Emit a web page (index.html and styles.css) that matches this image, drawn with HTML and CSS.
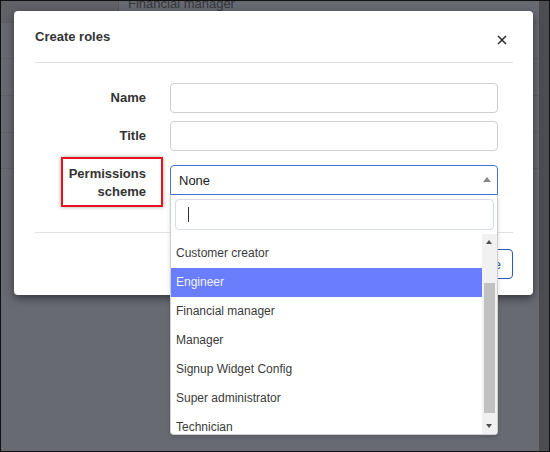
FILE: index.html
```html
<!DOCTYPE html>
<html lang="en">
<head>
<meta charset="utf-8">
<title>Create roles</title>
<link rel="stylesheet" href="styles.css">
</head>
<body>
<div class="screen">
  <div class="page">
    <div class="row row-first">
      <div class="cell-blank"></div>
      <div class="cell">Financial manager</div>
    </div>
    <div class="row row-a"></div>
    <div class="row row-b"></div>
    <div class="row row-b"></div>
    <div class="row row-a"></div>
  </div>
  <div class="scroll-strip"></div>

  <div class="modal">
    <div class="modal-header">
      <h4 class="modal-title">Create roles</h4>
      <svg class="close" width="10" height="10" viewBox="0 0 10 10"><path d="M1 1 L9 9 M9 1 L1 9" stroke="#2b2b2b" stroke-width="1.5" fill="none"/></svg>
    </div>
    <div class="modal-body">
      <div class="form-row">
        <label class="form-label">Name</label>
        <div class="input"></div>
      </div>
      <div class="form-row row-title">
        <label class="form-label">Title</label>
        <div class="input"></div>
      </div>
      <div class="form-row row-perm">
        <label class="form-label label-multi">Permissions<br>scheme<span class="annot"></span></label>
        <div class="select-wrap">
          <div class="select">
            <span>None</span>
            <span class="caret-up"></span>
          </div>
          <div class="dropdown">
            <div class="search"><span class="cursor"></span></div>
            <div class="list">
              <div class="item">Customer creator</div>
              <div class="item active">Engineer</div>
              <div class="item">Financial manager</div>
              <div class="item">Manager</div>
              <div class="item">Signup Widget Config</div>
              <div class="item">Super administrator</div>
              <div class="item">Technician</div>
              <div class="scrollbar">
                <span class="sb-up"></span>
                <span class="sb-thumb"></span>
                <span class="sb-down"></span>
              </div>
            </div>
          </div>
        </div>
      </div>
    </div>
    <div class="modal-footer">
      <button class="btn-save">Save</button>
    </div>
  </div>
</div>
</body>
</html>
```
FILE: styles.css
```css
* { box-sizing: border-box; }
html, body { margin: 0; padding: 0; }
body {
  font-family: "Liberation Sans", Arial, sans-serif;
  font-size: 13px;
  color: #333;
  background: #111;
}
.screen {
  position: relative;
  width: 550px;
  height: 452px;
  border: 1px solid #111;
  background: #676a71;
  display: flex;
  overflow: hidden;
}
.page {
  flex: 1;
  overflow: hidden;
}
.scroll-strip {
  width: 10px;
  background: #4c4d52;
}
.row { border-bottom: 1px solid #5d6066; }
.row-first { height: 22px; display: flex; }
.row-a { height: 36px; }
.row-b { height: 37px; }
.cell-blank { width: 117px; background: #606268; }
.cell {
  border-left: 1px solid #55575d;
  padding-left: 9px;
  line-height: 15px;
  margin-top: -5px;
  color: #34363b;
  font-size: 13px;
}

.modal {
  position: absolute;
  left: 13px;
  top: 10px;
  width: 519px;
  background: #fff;
  border-radius: 4px;
  box-shadow: 0 3px 9px rgba(0, 0, 0, 0.5);
  padding: 0 20px 0 21px;
}
.modal-header {
  display: flex;
  justify-content: space-between;
  align-items: flex-start;
  padding: 16px 0 15px;
  border-bottom: 1px solid #e2e2e2;
}
.modal-title {
  margin: 0;
  font-size: 13px;
  line-height: 20px;
  font-weight: bold;
  color: #333;
}
.close { margin-top: 8px; margin-right: 6px; display: block; }

.modal-body { padding: 20px 0 31px; }
.form-row {
  display: grid;
  grid-template-columns: 111px 328px;
  column-gap: 24px;
  align-items: center;
}
.row-title { margin-top: 8px; }
.row-perm { margin-top: 14px; align-items: start; }
.form-label {
  text-align: right;
  font-weight: bold;
  color: #333;
  line-height: 18px;
}
.label-multi { position: relative; }
.annot {
  position: absolute;
  left: 26px;
  right: -17px;
  top: -8px;
  bottom: -6px;
  border: 2px solid #e5141c;
  box-shadow: 0 0 4px rgba(0, 0, 0, 0.35);
}
.input {
  height: 30px;
  border: 1px solid #cfcfcf;
  border-radius: 4px;
}
.select-wrap { position: relative; z-index: 2; }
.select {
  height: 30px;
  border: 1px solid #4a72d6;
  border-radius: 4px 4px 0 0;
  display: flex;
  align-items: center;
  justify-content: space-between;
  padding: 0 6px 0 8px;
  color: #222;
  font-size: 13px;
}
.caret-up {
  width: 0;
  height: 0;
  border-left: 4px solid transparent;
  border-right: 4px solid transparent;
  border-bottom: 5px solid #888;
  margin-top: -1px;
}
.dropdown {
  position: absolute;
  top: 100%;
  left: 0;
  width: 328px;
  background: #fff;
  border: 1px solid #cfcfcf;
  border-top: none;
  border-radius: 0 0 4px 4px;
  box-shadow: 0 2px 4px rgba(0, 0, 0, 0.15);
  padding: 4px 0 0;
}
.search {
  margin: 0 3px 4px 4px;
  height: 31px;
  border: 1px solid #d4dde1;
  border-radius: 4px;
  display: flex;
  align-items: center;
}
.cursor {
  display: block;
  width: 1px;
  height: 15px;
  background: #333;
  margin-left: 12px;
}
.list {
  position: relative;
  height: 200px;
  overflow: hidden;
  padding: 5px 15px 0 0;
}
.item {
  height: 29px;
  line-height: 29px;
  padding-left: 5px;
  font-size: 12px;
  color: #3a3a3a;
  white-space: nowrap;
}
.item.active { background: #6a7dfd; color: #f1f2ff; }
.scrollbar {
  position: absolute;
  top: 0;
  right: 0;
  bottom: 0;
  width: 15px;
  background: #f1f1f1;
}
.sb-up, .sb-down {
  position: absolute;
  left: 4px;
  width: 0;
  height: 0;
  border-left: 3.5px solid transparent;
  border-right: 3.5px solid transparent;
}
.sb-up { top: 6px; border-bottom: 4px solid #505050; }
.sb-down { bottom: 6px; border-top: 4px solid #505050; }
.sb-thumb {
  position: absolute;
  left: 2px;
  top: 49px;
  width: 11px;
  height: 130px;
  background: #c1c1c1;
}
.modal-footer {
  border-top: 1px solid #e2e2e2;
  padding: 16px 0;
  display: flex;
  justify-content: flex-end;
}
.btn-save {
  height: 30px;
  padding: 0 11px;
  background: #fff;
  border: 1px solid #2a5db0;
  border-radius: 4px;
  color: #2a5db0;
  font-family: "Liberation Sans", Arial, sans-serif;
  font-size: 13px;
}
```
